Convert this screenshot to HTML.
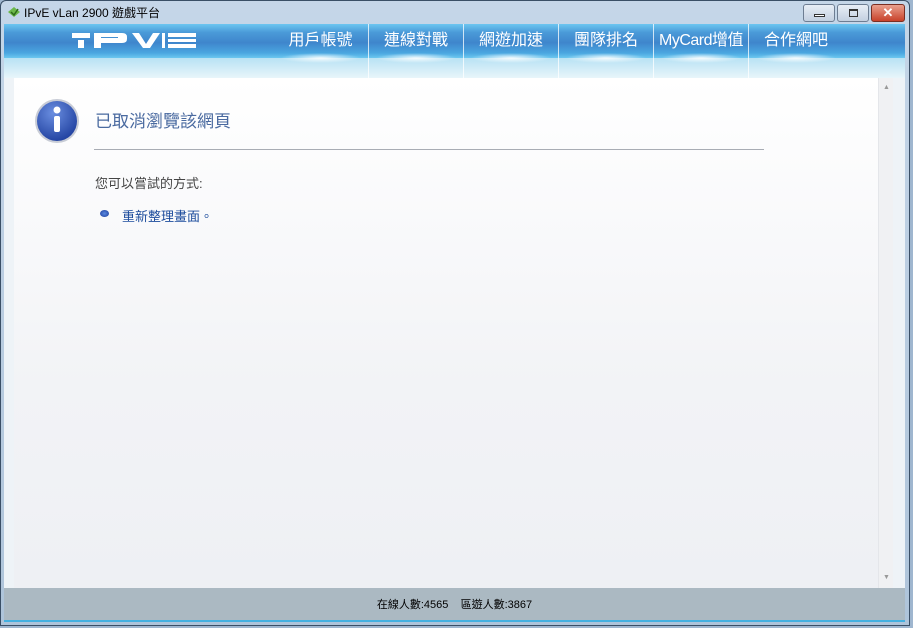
<!DOCTYPE html>
<html><head><meta charset="utf-8"><style>
*{margin:0;padding:0;box-sizing:border-box}
body{width:913px;height:628px;overflow:hidden;background:#9fb6cf;font-family:"Liberation Sans","Noto Sans CJK TC",sans-serif;position:relative}
.frame{position:absolute;left:0;top:0;width:910px;height:626px;background:linear-gradient(#c5d6e8,#aec4da);border:1px solid #3a4f66;border-radius:6px 6px 0 0}
.inner{position:absolute;left:4px;top:24px;width:901px;height:564px;background:#eef3f7}
.title{position:absolute;left:24px;top:4px;font-size:12px;color:#000}
.btns{position:absolute;right:8px;top:4px;display:flex;gap:2px}
.btn{width:32px;height:18px;border:1px solid #6d7d92;border-radius:3px;background:linear-gradient(#e8eef6,#c3d0e0);position:relative}
.btn.x{width:34px;background:linear-gradient(#e9a08e,#c8422a);border-color:#7a2e22}
.head{position:absolute;left:4px;top:24px;width:901px;height:54px}
.blue{position:absolute;left:0;top:0;width:100%;height:34px;background:linear-gradient(#6cc6f0 0,#4a9ad8 25%,#3f86cc 55%,#4aa6e0 85%,#6cc8f0 100%)}
.light{position:absolute;left:0;top:34px;width:100%;height:20px;background:linear-gradient(#b8e2f4,#e8f5fa)}
.nav{position:absolute;top:0;height:54px;width:95px;color:#fff;font-size:16px;text-align:center;line-height:34px;border-left:1px solid rgba(255,255,255,.75);background:radial-gradient(ellipse 40px 5px at 50% 34px,rgba(255,255,255,.9),rgba(255,255,255,0))}
.content{position:absolute;left:14px;top:78px;width:864px;height:510px;background:linear-gradient(#fff,#f2f3f6 60%,#eef0f4)}
.sb{position:absolute;left:878px;top:78px;width:15px;height:510px;background:#f0f1f3;border-left:1px solid #e4e6ea}
.foot{position:absolute;left:4px;top:588px;width:901px;height:34px;background:#abb9c2;font-size:11px;text-align:center;line-height:34px;color:#000;border-bottom:2px solid #44b0e0}
</style></head><body>
<div class="frame"></div>
<div class="inner"></div>
<svg style="position:absolute;left:7px;top:6px" width="14" height="12"><path d="M1 6 L7 1 L13 6 L7 11Z" fill="#6cb84a"/><path d="M4 6 L7 9 L11 3" stroke="#2d6a1a" stroke-width="1.5" fill="none"/></svg>
<div class="title">IPvE vLan 2900 遊戲平台</div>
<div class="btns"><div class="btn"><div style="position:absolute;left:10px;top:9px;width:11px;height:3px;border:1px solid #333;background:#fff"></div></div><div class="btn"><div style="position:absolute;left:11px;top:4px;width:9px;height:8px;border:1px solid #333;border-top-width:2px"></div></div><div class="btn x"><div style="position:absolute;left:0;top:0;width:32px;text-align:center;color:#fff;font-weight:bold;font-size:13px;line-height:16px">✕</div></div></div>
<div class="head"><div class="blue"></div><div class="light"></div>
<svg style="position:absolute;left:68px;top:8px" width="125" height="18" fill="#fff">
<rect x="0" y="1" width="18" height="5"/><rect x="6" y="8" width="6" height="8"/>
<path d="M22 1 H50 Q55 1 55 5 V7 Q55 11 50 11 H29 V16 H22 Z M29 6 H46 V5 H29 Z"/>
<path d="M60 1 H67 L74 12 L81 1 H88 L78 16 H71 Z"/>
<rect x="90" y="1" width="3" height="15"/><rect x="96" y="1" width="28" height="4"/><rect x="96" y="7" width="28" height="3"/><rect x="96" y="12" width="28" height="4"/>
</svg>
<div class="nav" style="left:269px;border-left:none">用戶帳號</div>
<div class="nav" style="left:364px">連線對戰</div>
<div class="nav" style="left:459px">網遊加速</div>
<div class="nav" style="left:554px">團隊排名</div>
<div class="nav" style="left:649px;letter-spacing:-0.5px">MyCard增值</div>
<div class="nav" style="left:744px">合作網吧</div>
</div>
<div class="content">
<svg style="position:absolute;left:20px;top:20px" width="46" height="46"><defs><radialGradient id="g" cx=".4" cy=".3" r=".8"><stop offset="0" stop-color="#6a8ee0"/><stop offset="1" stop-color="#1a3a9a"/></radialGradient></defs><circle cx="23" cy="23" r="22" fill="#c8ccd6"/><circle cx="23" cy="23" r="20" fill="url(#g)"/><circle cx="23" cy="12" r="3.5" fill="#fff"/><rect x="20" y="18" width="6" height="16" rx="2" fill="#fff"/></svg>
<div style="position:absolute;left:81px;top:29px;font-size:17px;color:#4a6aa0">已取消瀏覽該網頁</div>
<div style="position:absolute;left:80px;top:71px;width:670px;height:1px;background:#a8acb4"></div>
<div style="position:absolute;left:81px;top:95px;font-size:13px;color:#444">您可以嘗試的方式:</div>
<div style="position:absolute;left:86px;top:132px;width:9px;height:7px;border-radius:50%;background:radial-gradient(#5a8ae0,#1a3a9a)"></div>
<div style="position:absolute;left:108px;top:128px;font-size:13px;color:#1c4c9c">重新整理畫面。</div>
</div>
<div class="sb"><div style="position:absolute;left:4px;top:6px;font-size:7px;color:#999">▲</div><div style="position:absolute;left:4px;top:496px;font-size:7px;color:#999">▼</div></div>
<div class="foot">在線人數:4565&nbsp;&nbsp;&nbsp;&nbsp;區遊人數:3867</div>
</body></html>
